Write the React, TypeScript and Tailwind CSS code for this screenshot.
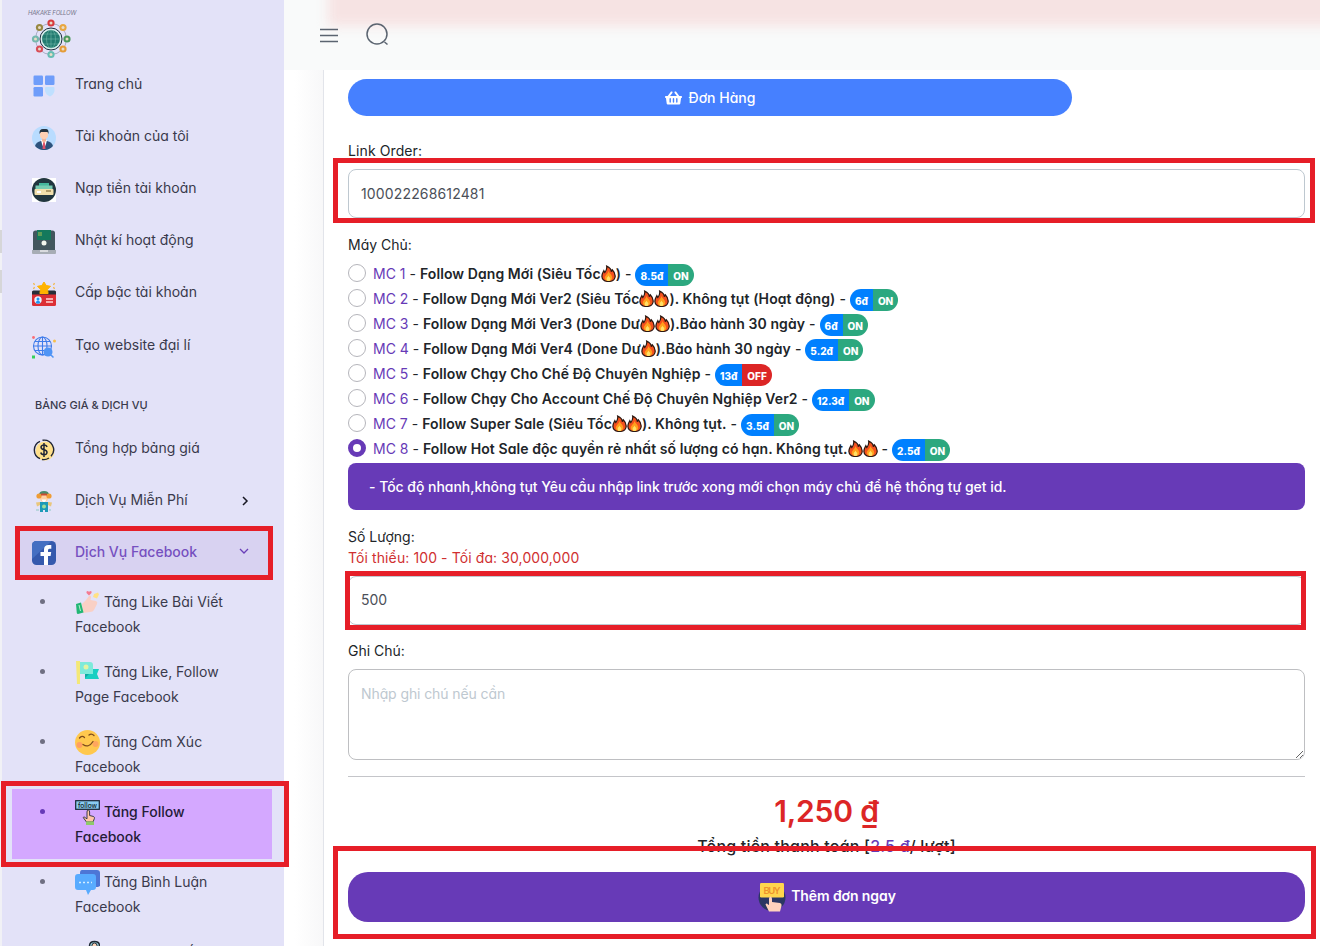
import type { ReactNode } from "react";
import clsx from "clsx";
import { FaShoppingBasket } from "react-icons/fa";

type MenuItem = { label: string; icon: ReactNode };
type SubItem = { first: string; second: string; icon: ReactNode; active?: boolean };
type Server = {
  id: number;
  name: ReactNode;
  price: string;
  on: boolean;
};

function Fire() {
  return (
    <svg viewBox="0 0 16 18" className="inline-block h-[17px] w-[15px] align-[-3px]">
      <path d="M6 1C10 3 11 5 11 7l1-2c3 3 3.500 5 3 8-.6 3-3.200 4.500-7 4.500S1.300 15.500 1 12.500C.7 9.500 2 8 3 6l1 2C6 6 6.500 4 6 1z" fill="#f4511e" stroke="#2b1710" strokeWidth="1.300" />
      <path d="M8 6c.5 3 4 4 4 7.500 0 2-1.500 3.500-4 3.500s-4-1.500-4-3.500C4 11 7.500 9.500 8 6z" fill="#ff9f1c" />
      <path d="M8 11c.5 1.500 2 2 2 3.500S9.300 17 8 17s-2-1-2-2.500S7.500 12.500 8 11z" fill="#ffe066" />
    </svg>
  );
}

const icon = "h-6 w-6 shrink-0";

function DashboardIcon() {
  return (
    <svg viewBox="0 0 24 24" className={icon}>
      <rect x="1.500" y="1.500" width="9.500" height="9.500" rx="1.200" fill="#6f9dfa" />
      <rect x="13" y="1.500" width="9.500" height="9.500" rx="1.200" fill="#6f9dfa" />
      <rect x="1.500" y="13" width="9.500" height="9.500" rx="1.200" fill="#6f9dfa" />
      <path d="M13 14q0-1 1-1h7.500q1 0 1 1v3q-1 4-4.500 5.500Q14 21 13 17z" fill="#bfe0ff" />
    </svg>
  );
}

function AccountIcon() {
  return (
    <svg viewBox="0 0 24 24" className={icon}>
      <circle cx="12" cy="12" r="12" fill="#b9dcff" />
      <path d="M3 20q1-4 6-5h6q5 1 6 5a12 12 0 0 1-18 0z" fill="#2d527c" />
      <path d="M9 14h6l-1 4-2 5-2-5z" fill="#fff" />
      <path d="M11.200 16h1.600l.7 7h-3z" fill="#e0526b" />
      <path d="M10 11h4v4l-2 2-2-2z" fill="#f3b59a" />
      <rect x="8" y="4" width="8" height="9" rx="4" fill="#ffd0b3" />
      <path d="M7.500 8Q7 3 11 3h3q3 0 2.500 5l-1-2H9z" fill="#26333f" />
    </svg>
  );
}

function DepositIcon() {
  return (
    <svg viewBox="0 0 24 24" className={icon}>
      <path d="M0 0h24v24H0z" fill="#fff" />
      <circle cx="12" cy="12" r="12" fill="#21363f" />
      <path d="M7 5h10v4H7z" fill="#45b79c" />
      <rect x="3.500" y="7.500" width="17" height="5" fill="#77cbb1" />
      <rect x="2.500" y="11" width="19" height="6" rx="1" fill="#f1dfac" />
      <path d="M14 13h5" stroke="#9a8654" strokeWidth="1.500" />
      <path d="M5 14h4" stroke="#fff" strokeWidth="2" />
    </svg>
  );
}

function ActivityIcon() {
  return (
    <svg viewBox="0 0 24 24" className={icon}>
      <path d="M1 3q0-2.500 2.500-2.500h17Q23 .5 23 3v17H1z" fill="#43565e" />
      <path d="M5 0h14v10H5z" fill="#14795c" />
      <path d="M7 2v4M9 2v4" stroke="#d1d14f" strokeWidth=".8" />
      <circle cx="12" cy="13" r="2.500" fill="#f3f6ee" />
      <path d="M0 20h24v3q0 1-1 1H1q-1 0-1-1z" fill="#a7adb5" />
      <path d="M8 21h8" stroke="#e8eaec" strokeWidth="1.500" />
    </svg>
  );
}

function RankIcon() {
  return (
    <svg viewBox="0 0 24 24" className={icon}>
      <rect x="0" y="9" width="24" height="15" rx="1.500" fill="#dc2f35" />
      <path d="M0 10q0-1.500 1.500-1.500h21Q24 8.500 24 10v2.500H0z" fill="#262f39" />
      <path d="m12 0 2.200 3.500 4.300.8-3 3 .6 4.200H7.900l.6-4.200-3-3 4.300-.8z" fill="#ffb300" stroke="#ffb300" strokeLinejoin="round" />
      <circle cx="6" cy="18" r="3.700" fill="#e9f5ff" />
      <circle cx="6" cy="17" r="1.500" fill="#2196f3" />
      <path d="M3.500 20.500q2.500-4 5 0Q6 23 3.500 20.500z" fill="#2196f3" />
      <path d="M14 17h7m-7 3h7" stroke="#ffd8d8" strokeWidth="1.600" />
      <path d="m1.500 1 1 2m0 2-1 2m21-6-1 2m0 2 1 2" stroke="#f2b84c" strokeWidth="1.300" />
    </svg>
  );
}

function WebsiteIcon() {
  return (
    <svg viewBox="0 0 24 24" className={icon}>
      <g fill="none" stroke="#3e7bea" strokeWidth="1.100">
        <circle cx="10.500" cy="11" r="9" />
        <ellipse cx="10.500" cy="11" rx="4.500" ry="9" />
        <path d="M10.500 2v18M1.500 11h18M3 6.500h15M3 15.500h15" />
      </g>
      <circle cx="16" cy="17" r="4.500" fill="#4f94f5" />
      <path d="m19 20 2.500 2.500" stroke="#4f94f5" strokeWidth="1.500" />
      <circle cx="1.500" cy="2.500" r="1.400" fill="#fa6d75" />
      <circle cx="22.500" cy="6" r="1.500" fill="#f8bf4a" />
      <path d="M0 20.500h3v3H0z" fill="#34d15b" />
    </svg>
  );
}

function PriceIcon() {
  return (
    <svg viewBox="0 0 24 24" className={icon}>
      <circle cx="13" cy="13" r="9.500" fill="#ffe08b" />
      <path d="M8 3.300A9.500 9.500 0 0 0 8 20.700M10.500 2.300a9.600 9.600 0 0 1 8.500 16M17 20a9.500 9.500 0 0 1-7 1.500" fill="none" stroke="#202536" strokeWidth="1.400" />
      <path d="M15 9q-.5-2-3-2t-3 2q0 2 3 2.700t3 2.800q-.3 2.200-3 2.200t-3.200-2.200M12 5v14" fill="none" stroke="#202536" strokeWidth="1.500" />
    </svg>
  );
}

function FreeIcon() {
  return (
    <svg viewBox="0 0 24 24" className={icon}>
      <path d="M7 5q0-4 5-4t5 4z" fill="#4a8b6b" />
      <circle cx="12" cy="8" r="4" fill="#ffd1a4" />
      <circle cx="7" cy="6" r="2.600" fill="#ef9c35" />
      <circle cx="17" cy="6" r="2.600" fill="#ef9c35" />
      <path d="M9 3.500h6v2H9z" fill="#c94c32" />
      <path d="M9.500 9.500h5L13 12h-2z" fill="#fff" />
      <path d="m4 12.500 4-.5h8l4 .5-1 4-3-1.500H8l-3 1.500z" fill="#e9c67c" />
      <path d="M8 12h8v10h-3v-2h-2v2H8z" fill="#1d9ab8" />
      <circle cx="12" cy="16.500" r="2" fill="#9fdc9c" />
      <path d="M4 20h3m10 0h2" stroke="#8fc7c4" strokeWidth="1.200" />
    </svg>
  );
}

function FacebookIcon() {
  return (
    <svg viewBox="0 0 24 24" className={icon}>
      <rect width="24" height="24" rx="4.500" fill="#3559ad" />
      <path d="M4.500 0h15L0 18V4.500Q0 0 4.500 0z" fill="#456fc2" />
      <path d="M12 24v-9H8.500v-4H12V8.500Q12 4 16.500 4h2.800v3.700h-2Q16 7.700 16 9.200V11h3.200l-.6 4H16v9z" fill="#fff" />
    </svg>
  );
}

const subIcon = "mr-1 inline-block h-[25px] w-[25px] align-[-8px]";

function LikeIcon() {
  return (
    <svg viewBox="0 0 25 25" className={subIcon}>
      <path d="m7 14 4-4 3-4q2-1 2 1l-.5 3 5.500 1q2 1 1 3l-3 6q-1 2-4 2l-7 1z" fill="#f9d0c5" />
      <path d="m1 14 5-1.500 2.500 10L3 24q-1 0-1.200-1z" fill="#22b775" />
      <path d="m4 15 1.500 6" stroke="#b8f1d0" />
      <path d="M14 5.500 11.500 3q-.5-2 1.200-2L14 1.800 15.500 1q1.700.2 1 2z" fill="#f57b91" />
      <path d="m19 4 4-1.500 1 2-2 4-4-1.500z" fill="#ffe185" />
    </svg>
  );
}

function PageIcon() {
  return (
    <svg viewBox="0 0 25 25" className={subIcon}>
      <path d="M1 1h4v23H2z" fill="#f4e877" />
      <path d="M10 9h14l-2 5 2 5H10z" fill="#19cfc2" />
      <path d="M5 2h10q3 0 3 3v9H5z" fill="#7eeadb" />
      <circle cx="11" cy="7" r="2.500" fill="#e4f3a2" />
      <path d="m10 14 4 0-4 4z" fill="#12a8a3" />
    </svg>
  );
}

function SmileIcon() {
  return (
    <svg viewBox="0 0 25 25" className={subIcon}>
      <circle cx="12.500" cy="12.500" r="12.500" fill="#ffc84e" />
      <circle cx="4.500" cy="15" r="3" fill="#ff9f63" />
      <circle cx="20.500" cy="14" r="3" fill="#ffa65f" />
      <path d="M4.500 8q2.500-3 5-.5m4.500-2.500q2.500-2 5 .5M8 14.500q5.500 4 10-3" fill="none" stroke="#7c4b1d" strokeWidth="1.300" strokeLinecap="round" />
    </svg>
  );
}

function FollowIcon() {
  return (
    <svg viewBox="0 0 25 25" className={subIcon}>
      <rect x=".7" y=".7" width="23.600" height="8.600" fill="#8accf2" stroke="#162432" strokeWidth="1.200" />
      <text x="12.500" y="7.500" textAnchor="middle" fontSize="7" fontWeight="500" fill="#111d29" textLength="19" lengthAdjust="spacingAndGlyphs">follow</text>
      <path d="M12 12q0-2 1.300-2t1.300 2v3.500l4 1q1 .5.800 2L18 22h-6.500l-3.300-4.500q.5-1.500 2.300.3l1.500 1z" fill="#ffc5a8" stroke="#283039" strokeWidth=".9" />
      <path d="M11 21.500h8V25h-8z" fill="#8ec96b" />
    </svg>
  );
}

function CommentIcon() {
  return (
    <svg viewBox="0 0 25 25" className={subIcon}>
      <path d="M7 0h15q3 0 3 3v13l-2 1H5V3q0-3 2-3z" fill="#4d76d6" />
      <path d="M3 4h15q3 0 3 3v10q0 3-3 3h-2l-3 5-2-5H3q-3 0-3-3V7q0-3 3-3z" fill="#58abff" />
      <path d="M4 12.500h13" stroke="#d4edff" strokeWidth="1.500" strokeDasharray="2 2" />
    </svg>
  );
}

function HeadIcon() {
  return (
    <svg viewBox="0 0 25 25" className={subIcon}>
      <path d="M14.500 13V6q0-4.500 5-4.500t5 4.500v7" fill="#9fd3dd" stroke="#202a36" strokeWidth="1.500" />
      <circle cx="19.500" cy="5.500" r="2.500" fill="#ffd5ba" stroke="#202a36" />
    </svg>
  );
}

function BuyIcon() {
  return (
    <svg viewBox="0 0 30 30" className="h-[30px] w-[30px]">
      <circle cx="15" cy="15.500" r="13.500" fill="#2b3763" />
      <rect x="3" y="1" width="24" height="14.500" rx="1.200" fill="#ffd54d" />
      <text x="15" y="12" textAnchor="middle" fontSize="9.500" fill="#ed922c" textLength="17">BUY</text>
      <path d="M12 17q0-2.500 1.500-2.500t1.500 2.500v3l8 1q2 .5 1.500 3L23 29.500H12L8.500 22.500q1-2 2.500 0l1 .5z" fill="#ffd3bd" />
    </svg>
  );
}

const nodes = [
  { x: 21, y: 5, color: "#d83a3d" },
  { x: 33, y: 9.500, color: "#e8a640" },
  { x: 37, y: 21, color: "#4b995c" },
  { x: 33, y: 31, color: "#e59c38" },
  { x: 21, y: 36.500, color: "#65bdb3" },
  { x: 9.500, y: 31, color: "#d94c57" },
  { x: 5.500, y: 21, color: "#75b9ae" },
  { x: 9.500, y: 9.500, color: "#978842" },
];

function Logo() {
  return (
    <div className="ml-[26px] h-[57.500px] pt-[8px]">
      <div className="h-[10px] w-[60px] text-[6px] leading-[10px] tracking-[-0.25px] whitespace-nowrap text-[#77778c] italic">
        HAKAKE FOLLOW
      </div>
      <svg viewBox="0 0 42 42" className="ml-[2px] h-[42px] w-[42px]">
        <circle cx="21" cy="21" r="15.500" fill="none" stroke="#9295ae" strokeWidth=".7" />
        <circle cx="21" cy="21" r="11" fill="#d9f0ed" stroke="#1d2b3e" strokeWidth="1" />
        <circle cx="21" cy="21" r="9" fill="#227b70" />
        <path d="M12 21h18M21 12v18M14 16h14M14 26h14" stroke="#70b7a7" strokeWidth=".6" />
        <ellipse cx="21" cy="21" rx="4.500" ry="9" fill="none" stroke="#70b7a7" strokeWidth=".6" />
        {nodes.map((n) => (
          <g key={n.color}>
            <circle cx={n.x} cy={n.y} r="3.600" fill={n.color} />
            <circle cx={n.x} cy={n.y} r="1.500" fill="#e8dcc6" />
          </g>
        ))}
      </svg>
    </div>
  );
}

const menu: MenuItem[] = [
  { label: "Trang chủ", icon: <DashboardIcon /> },
  { label: "Tài khoản của tôi", icon: <AccountIcon /> },
  { label: "Nạp tiền tài khoản", icon: <DepositIcon /> },
  { label: "Nhật kí hoạt động", icon: <ActivityIcon /> },
  { label: "Cấp bậc tài khoản", icon: <RankIcon /> },
  { label: "Tạo website đại lí", icon: <WebsiteIcon /> },
];

const subMenu: SubItem[] = [
  { first: "Tăng Like Bài Viết", second: "Facebook", icon: <LikeIcon /> },
  { first: "Tăng Like, Follow", second: "Page Facebook", icon: <PageIcon /> },
  { first: "Tăng Cảm Xúc", second: "Facebook", icon: <SmileIcon /> },
  { first: "Tăng Follow", second: "Facebook", icon: <FollowIcon />, active: true },
  { first: "Tăng Bình Luận", second: "Facebook", icon: <CommentIcon /> },
  { first: "Tăng Lượt Mắt", second: "Facebook", icon: <HeadIcon /> },
];

const servers: Server[] = [
  { id: 1, name: <>Follow Dạng Mới (Siêu Tốc<Fire />)</>, price: "8.5đ", on: true },
  { id: 2, name: <>Follow Dạng Mới Ver2 (Siêu Tốc<Fire /><Fire />). Không tụt (Hoạt động)</>, price: "6đ", on: true },
  { id: 3, name: <>Follow Dạng Mới Ver3 (Done Dư<Fire /><Fire />).Bảo hành 30 ngày</>, price: "6đ", on: true },
  { id: 4, name: <>Follow Dạng Mới Ver4 (Done Dư<Fire />).Bảo hành 30 ngày</>, price: "5.2đ", on: true },
  { id: 5, name: <>Follow Chạy Cho Chế Độ Chuyên Nghiệp</>, price: "13đ", on: false },
  { id: 6, name: <>Follow Chạy Cho Account Chế Độ Chuyên Nghiệp Ver2</>, price: "12.3đ", on: true },
  { id: 7, name: <>Follow Super Sale (Siêu Tốc<Fire /><Fire />). Không tụt.</>, price: "3.5đ", on: true },
  { id: 8, name: <>Follow Hot Sale độc quyền rẻ nhất số lượng có hạn. Không tụt.<Fire /><Fire /></>, price: "2.5đ", on: true },
];

function MenuRow({ item, children }: { item: MenuItem; children?: ReactNode }) {
  return (
    <div className="flex h-[52.2px] items-center pl-[30px]">
      <span className="mt-1">{item.icon}</span>
      <span className="-mt-px ml-[19px] whitespace-nowrap">{item.label}</span>
      {children}
    </div>
  );
}

function Sidebar() {
  return (
    <aside className="h-full w-[282px] shrink-0 overflow-hidden bg-[#e3e2f8] text-[14px] text-[#3a3a4c]">
      <Logo />
      {menu.map((item) => (
        <MenuRow key={item.label} item={item} />
      ))}
      <div className="flex h-[51px] items-center pt-[18px] pl-[33px] text-[11px] font-medium">
        BẢNG GIÁ & DỊCH VỤ
      </div>
      <MenuRow item={{ label: "Tổng hợp bảng giá", icon: <PriceIcon /> }} />
      <MenuRow item={{ label: "Dịch Vụ Miễn Phí", icon: <FreeIcon /> }}>
        <svg viewBox="0 0 8 10" className="mt-0.5 mr-[35px] ml-auto h-[10px] w-[8px]">
          <path d="m2 1 4 4-4 4" fill="none" stroke="#171722" strokeWidth="1.500" />
        </svg>
      </MenuRow>
      <div className="mr-[15px] ml-[18px] flex h-[52.500px] items-center bg-[#d8d2f1] pl-3 text-[#7650c0]">
        <span className="mt-px"><FacebookIcon /></span>
        <span className="-mt-px ml-[19px] font-medium">Dịch Vụ Facebook</span>
        <svg viewBox="0 0 10 8" className="-mt-0.5 mr-[20px] ml-auto h-[8px] w-[10px]">
          <path d="m1 2 4 4 4-4" fill="none" stroke="#6a3fb8" strokeWidth="1.300" />
        </svg>
      </div>
      {subMenu.map((item) => (
        <div
          key={item.first}
          className={clsx(
            "mr-[12px] ml-[10px] flex h-[70px] py-[10px] leading-[25px]",
            item.active && "bg-[#d4a8ff] font-medium text-[#241c38]",
          )}
        >
          <span className={clsx("mt-[10px] ml-[28px] size-[5px] rounded-full", item.active ? "bg-[#673ab7]" : "bg-[#6f6f82]")} />
          <div className="ml-[30px] whitespace-nowrap">
            <div className="h-[25px]">{item.icon}{item.first}</div>
            <div>{item.second}</div>
          </div>
        </div>
      ))}
    </aside>
  );
}

function TopBar() {
  return (
    <header className="relative h-[70px] overflow-hidden bg-[#f9fafa]">
      <div className="absolute -top-5 -right-10 left-[44px] h-[46px] bg-[#f6e3e3] blur-[6px]" />
      <div className="relative flex pt-[22px] pl-[36px] text-[#5b6470]">
        <svg viewBox="0 0 18 16" className="mt-[5px] h-4 w-[18px]">
          <path d="M0 2.500h18M0 8.500h18M0 14.500h18" stroke="currentColor" strokeWidth="1.500" />
        </svg>
        <svg viewBox="0 0 24 24" className="ml-7 h-6 w-6" fill="none" stroke="currentColor" strokeWidth="1.500">
          <circle cx="11" cy="12" r="10" />
          <path d="m18.500 20 3 2.500" />
        </svg>
      </div>
    </header>
  );
}

function ServerRow({ server }: { server: Server }) {
  const checked = server.id === 8;
  return (
    <label className="flex h-[25px] items-center whitespace-nowrap text-[#212529]">
      <span
        className={clsx(
          "-mt-px size-[18px] shrink-0 rounded-full",
          checked ? "border-[5.500px] border-[#673ab7]" : "border border-[#b5b5bb]",
        )}
      />
      <span className="ml-[7px] text-[#673ab7]">MC {server.id}</span>
      <span className="ml-1">-</span>
      <span className="ml-1 font-semibold tracking-[0.08px]">{server.name}</span>
      <span className="ml-1 font-medium">-</span>
      <span className="mt-[3px] ml-1 flex h-[22px] items-center overflow-hidden rounded-full text-[10px] leading-[22px] font-extrabold text-white">
        <span className="bg-[#0080ff] px-[5px] pt-px">{server.price}</span>
        <span className={clsx("px-[5px] pt-px", server.on ? "bg-[#2ca87f]" : "bg-[#dc2626]")}>{server.on ? "ON" : "OFF"}</span>
      </span>
    </label>
  );
}

function OrderForm() {
  return (
    <div className="ml-[39px] flex h-[876px] flex-col border-l border-[#e2e4ea] bg-white pt-[9px] pr-[15px] pl-[24px] text-[14px] text-[#212529]">
      <button className="flex h-[37px] w-[724px] items-center justify-center gap-[7px] rounded-full bg-[#4680ff] font-medium text-white">
        <FaShoppingBasket className="h-4 w-[17px]" />
        Đơn Hàng
      </button>

      <div className="mt-6 h-[21px] tracking-[0.1px]">Link Order:</div>
      <div className="mt-2 flex h-[49px] items-center rounded-lg border border-[#bec8d0] px-3 tracking-[0.15px] text-[#4b4f58]">
        100022268612481
      </div>

      <div className="mt-[16px] h-[21px]">Máy Chủ:</div>
      <div className="mt-[6px]">
        {servers.map((server) => (
          <ServerRow key={server.id} server={server} />
        ))}
      </div>
      <div className="mt-0.5 flex h-[47px] items-center rounded-lg bg-[#673ab7] pl-[21px] font-medium tracking-[-0.035px] text-white">
        - Tốc độ nhanh,không tụt Yêu cầu nhập link trước xong mới chọn máy chủ để hệ thống tự get id.
      </div>

      <div className="mt-4 h-[21px]">Số Lượng:</div>
      <div className="h-[21px] tracking-[0.1px] text-[#d03030]">Tối thiểu: 100 - Tối đa: 30,000,000</div>
      <div className="mt-2 flex h-[49px] items-center rounded-lg border border-[#bec8d0] px-3 pb-0.5 text-[#4b4f58]">
        500
      </div>

      <div className="mt-[15px] h-[21px]">Ghi Chú:</div>
      <textarea
        placeholder="Nhập ghi chú nếu cần"
        className="mt-[8px] h-[91px] w-full shrink-0 rounded-lg border border-[#bebfc2] px-3 py-[13px] tracking-[-0.1px] placeholder:text-[#bec8d0]"
      />
      <hr className="mt-4 border-[#c4c5c9]" />

      <div className="mt-4 h-9 text-center text-[30px] leading-9 font-semibold tracking-[-0.2px] text-[#dc2626]">1,250 ₫</div>
      <div className="mt-[6px] h-[22px] text-center text-[16px] leading-[22px] font-medium tracking-[0.2px]">
        Tổng tiền thanh toán [<span className="text-[#673ab7]">2.5 đ</span>/ lượt]
      </div>
      <button className="mt-[15px] flex h-[50px] shrink-0 items-center justify-center gap-1 rounded-[20px] bg-[#673ab7] font-semibold tracking-[-0.1px] text-white">
        <BuyIcon />
        <span className="-mt-[3px]">Thêm đơn ngay</span>
      </button>
    </div>
  );
}

// Highlight frames laid over the steps of the guide
const frame = "pointer-events-none absolute border-5 border-[#e61e28]";

export default function App() {
  return (
    <div className="relative flex h-[946px] w-[1320px] overflow-hidden bg-white font-['Inter','Noto_Sans',sans-serif] [font-feature-settings:'cv11'_1]">
      <div className="flex w-0.5 shrink-0 flex-col bg-[#f1f1f6] pt-[230px]">
        <span className="h-[23px] bg-[#d6d6d8]" />
        <span className="mt-[17px] h-[23px] bg-[#d6d6d8]" />
      </div>
      <Sidebar />
      <main className="min-w-0 flex-1 bg-linear-to-r from-white from-1% to-[#f7f7f8] to-4%">
        <TopBar />
        <OrderForm />
      </main>
      <div className={clsx(frame, "top-[526px] left-[15px] h-[54px] w-[258px]")} />
      <div className={clsx(frame, "top-[781px] left-[1px] h-[86px] w-[288px]")} />
      <div className={clsx(frame, "top-[158px] left-[333px] h-[65px] w-[982px]")} />
      <div className={clsx(frame, "top-[571px] left-[345px] h-[59px] w-[961px]")} />
      <div className={clsx(frame, "top-[846px] left-[333px] h-[93px] w-[983px]")} />
    </div>
  );
}
